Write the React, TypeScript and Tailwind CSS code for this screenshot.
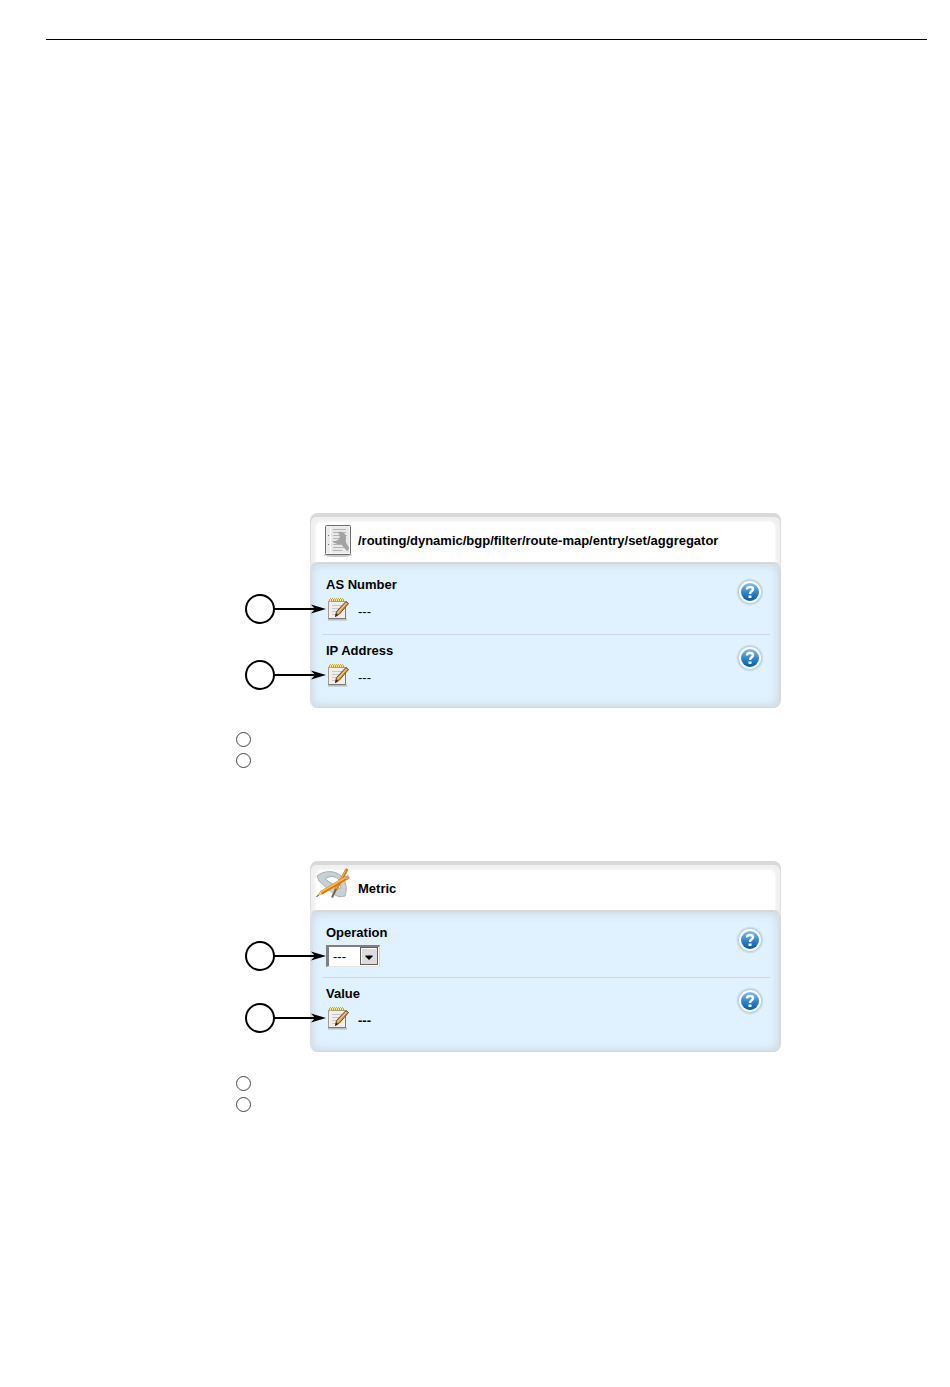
import React from 'react';

interface FieldProps {
  label: string;
  first?: boolean;
  children: React.ReactNode;
}

interface PanelProps {
  title: string;
  icon: React.ReactNode;
  children: React.ReactNode;
}

const boldText = 'text-[13px] font-bold';

const DocumentIcon = () => (
  <svg className="mt-[2px] ml-2" width="28" height="34" viewBox="0 0 28 34" aria-hidden="true">
    <ellipse cx="14" cy="31" rx="14" ry="2" fill="#c9c9c9" />
    <rect x="1.5" y="1.5" width="25" height="29" rx="1" fill="#f3f3f3" stroke="#6c6c6c" />
    <rect x="3" y="3" width="22" height="26" fill="#e8e8e8" />
    <path d="M6.5 3v26" stroke="#fff" />
    <path d="M4.500 11v1M4.500 20v1" stroke="#777" />
    <path d="M9 5.5h13M9 8.5h13M9 11.5h14M9 14.5h12M9 17.5h10M9 20.5h13M9 23.5h14M9 26.5h9" stroke="#b5b5b5" />
    <path
      d="M14 8c4-1 8 1 8 6 0 2-.5 3 0 4.500l3 5c0 2-1 3.500-2 3.500l-6-7c-3 .5-7-.5-9-3 3 .5 6-.5 7-2 1.500-2 .5-4-1-7z"
      fill="#a3a3a3"
    />
  </svg>
);

const DraftingIcon = () => (
  <svg className="-mt-[2px]" width="34" height="34" viewBox="0 0 34 34" aria-hidden="true">
    <path
      d="M1 8C8 2 20 2 26 9c5 6 5 13 3 19-3 1-7 1-10-1L3 13z"
      fill="#c6d0d7"
      stroke="#a5b1ba"
    />
    <path d="M9 11c5-4 11-3 14 1 2 3 2 6 1 9z" fill="#fff" stroke="#a2afb8" />
    <path d="M30.500 2 20 21" stroke="#c77716" strokeWidth="3" strokeLinecap="round" />
    <path d="M30 2 19.500 21" stroke="#f5a94a" strokeWidth="1.500" />
    <path d="m20 21-4 8.500" stroke="#7d6350" strokeWidth="2" />
    <path d="M31 9.500 5 25" stroke="#d77b16" strokeWidth="4" />
    <path d="M30.500 9 5 24" stroke="#ffb84e" strokeWidth="2" />
    <path d="m29 9 3-2 2 3-3 2z" fill="#e3928c" />
    <path d="m3.500 24-3 4.500 5-2z" fill="#dfb581" />
    <path d="m.5 28.500 2-1" stroke="#333" />
  </svg>
);

const NotepadIcon = () => (
  <svg width="22" height="24" viewBox="0 0 22 24" aria-hidden="true">
    <path d="M1 22.500h19" stroke="#8f9da6" strokeWidth="2" opacity=".6" />
    <rect x="1.500" y="4.500" width="17" height="17" fill="#f0eeee" stroke="#a39b92" />
    <path d="M18.500 9v12.500H1.500" fill="none" stroke="#84796f" />
    <path d="M5 8.500h10M5 11.500h8M5 14.500h6M5 17.500h4" stroke="#c6c6cc" />
    <path
      d="M2.500 4.500v-2q1-2 2 0v2m0-2q1-2 2 0v2m0-2q1-2 2 0v2m0-2q1-2 2 0v2m0-2q1-2 2 0v2m0-2q1-2 2 0v2m0-2q1-2 2 0v2"
      fill="#ffe885"
      stroke="#c29a16"
    />
    <path d="m19 4.500 2.500 2L12.500 17l-4 2.500 1-5z" fill="#cf9c4c" stroke="#70451a" />
    <path d="m19.500 6-9 10" stroke="#f7d694" />
    <path d="m8 20 1-3.500 2 1.500z" fill="#222" />
  </svg>
);

const HelpIcon = () => (
  <svg width="30" height="30" viewBox="0 0 30 30" aria-hidden="true">
    <defs>
      <linearGradient id="helpFill" x1="0" y1="0" x2="0" y2="1">
        <stop offset="0" stopColor="#7ec0f1" />
        <stop offset=".5" stopColor="#3688cc" />
        <stop offset="1" stopColor="#0759a3" />
      </linearGradient>
      <radialGradient id="helpShade">
        <stop offset=".7" stopColor="#71889a" stopOpacity=".55" />
        <stop offset="1" stopColor="#71889a" stopOpacity="0" />
      </radialGradient>
    </defs>
    <circle cx="15" cy="15" r="14" fill="url(#helpShade)" />
    <circle cx="15" cy="15" r="11" fill="#fff" />
    <circle cx="15" cy="15" r="9" fill="url(#helpFill)" />
    <path d="M12 12.500q0-2.500 3-2.500t3 2.200c0 2.300-3 1.800-3 4.800" fill="none" stroke="#fff" strokeWidth="2.500" />
    <path d="M13.500 18.500h3v2.500h-3z" fill="#fff" />
  </svg>
);

// Numbered marker with an arrow that points at a control in the panel
const Callout = () => (
  <svg
    className="pointer-events-none absolute top-1/2 right-full -translate-y-1/2"
    width="82"
    height="32"
    viewBox="0 0 82 32"
    aria-hidden="true"
  >
    <circle cx="16" cy="16" r="14" fill="#fff" stroke="#000" strokeWidth="2" />
    <path d="M30 16h42" stroke="#000" strokeWidth="2" />
    <path d="m82 16-15-4.500 4 4.500-4 4.500z" fill="#000" />
  </svg>
);

const EditValue = ({ name, bold }: { name: string; bold?: boolean }) => (
  <div className="relative flex h-6 items-end gap-[9px] pl-px">
    <Callout />
    <button type="button" aria-label={`Edit ${name}`} className="shrink-0">
      <NotepadIcon />
    </button>
    <span className={bold ? 'text-[13px] leading-[18px] font-bold' : 'text-[13px] leading-[18px]'}>---</span>
  </div>
);

const Field: React.FC<FieldProps> = ({ label, first, children }) => (
  <div className={first ? 'flex justify-between' : 'flex justify-between border-t border-[#d3d7da] pt-[6px]'}>
    <div className="pl-1">
      {children}
    </div>
    <button type="button" aria-label={`Help for ${label}`} className="mt-[2px] mr-[5px] self-start">
      <HelpIcon />
    </button>
  </div>
);

const Panel: React.FC<PanelProps> = ({ title, icon, children }) => (
  <section className="rounded-lg bg-[#eaeaea]">
    <div className="rounded-t-lg bg-[#d9d9d9] pt-1">
      <header className="rounded-t-md border-x border-[#dcdcdc] bg-[#f0f0f0] px-[5px] pt-[5px]">
        <div className="flex h-10 items-center rounded-t-md bg-white pb-[2px] shadow-[0_0_3px_1px_#fafafa]">
          <div className="w-[42px] shrink-0 self-start">{icon}</div>
          <h2 className={boldText}>{title}</h2>
        </div>
      </header>
    </div>
    <div className="rounded-lg border-t-2 border-r-2 border-b border-l border-t-[#d6d8da] border-r-[#d8dbdd] border-b-[#d2d6d9] border-l-[#dcdfe1] bg-[#e0f2ff] pt-[11px] pr-[9px] pb-px pl-[11px] shadow-[inset_0_0_8px_2px_#cfd9e0]">
      {children}
    </div>
  </section>
);

const MarkerList = () => (
  <ol className="mt-6 space-y-[6px] pl-[236px]">
    <li className="size-[15px] rounded-full border border-[#444]" />
    <li className="size-[15px] rounded-full border border-[#444]" />
  </ol>
);

export default function App() {
  return (
    <main className="bg-white pt-[39px] pb-[275px] font-['Liberation_Sans',Arial,sans-serif] text-black">
      <hr className="mr-[23px] ml-[46px] border-black" />

      <div className="mt-[473px] pr-[169px] pl-[310px]">
        <Panel
          title="/routing/dynamic/bgp/filter/route-map/entry/set/aggregator"
          icon={<DocumentIcon />}
        >
          <Field label="AS Number" first>
            <h3 className={`${boldText} leading-5`}>AS Number</h3>
            <div className="mt-[2px] mb-[13px]">
              <EditValue name="AS Number" />
            </div>
          </Field>
          <Field label="IP Address">
            <h3 className={`${boldText} leading-5`}>IP Address</h3>
            <div className="mt-[2px] mb-[19px]">
              <EditValue name="IP Address" />
            </div>
          </Field>
        </Panel>
      </div>
      <MarkerList />

      <div className="mt-[93px] pr-[169px] pl-[310px]">
        <Panel title="Metric" icon={<DraftingIcon />}>
          <Field label="Operation" first>
            <label htmlFor="operation" className={`${boldText} block leading-5`}>
              Operation
            </label>
            <div className="relative mt-[2px] mb-[10px] h-[22px] w-[54px]">
              <Callout />
              <select
                id="operation"
                className="block h-full w-full appearance-none border-t-2 border-r border-b border-l-3 border-t-[#808080] border-r-[#d8d4cc] border-b-[#e6e4df] border-l-[#808080] bg-white pl-1 text-[13px] leading-4"
              >
                <option>---</option>
              </select>
              <svg
                className="pointer-events-none absolute top-[2px] right-[2px]"
                width="18"
                height="18"
                viewBox="0 0 18 18"
                aria-hidden="true"
              >
                <rect x=".5" y=".5" width="17" height="17" fill="#dcdcdc" stroke="#606060" />
                <path d="M1.500 16V1.500H16" fill="none" stroke="#fff" />
                <path d="M5.500 8.500h7v1L9 13 5.500 9.500z" fill="#000" />
              </svg>
            </div>
          </Field>
          <Field label="Value">
            <h3 className={`${boldText} leading-5`}>Value</h3>
            <div className="mt-[2px] mb-5">
              <EditValue name="Value" bold />
            </div>
          </Field>
        </Panel>
      </div>
      <MarkerList />
    </main>
  );
}
